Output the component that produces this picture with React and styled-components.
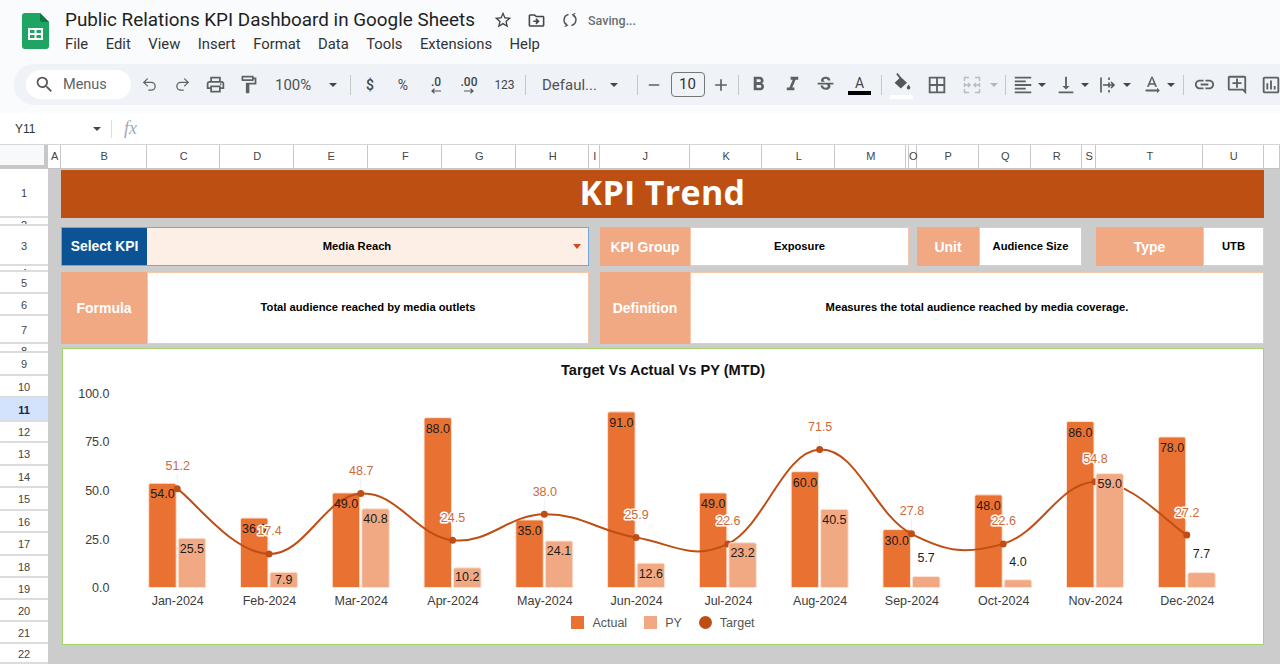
import React from 'react';
import styled, { createGlobalStyle } from 'styled-components';
import {
    MdSearch, MdOutlinePrint, MdOutlineFormatPaint, MdOutlineStarBorder, MdOutlineDriveFileMove,
    MdFormatBold, MdFormatItalic, MdStrikethroughS, MdOutlineBorderAll, MdFormatAlignLeft,
    MdVerticalAlignBottom, MdLink, MdOutlineAddComment, MdOutlineInsertChart, MdAdd, MdRemove,
    MdTextRotationNone,
} from 'react-icons/md';
import { Undo2, Redo2 } from 'lucide-react';

const MENU = ['File', 'Edit', 'View', 'Insert', 'Format', 'Data', 'Tools', 'Extensions', 'Help'];

const COLUMNS = [
    ['A', 13], ['B', 86], ['C', 73], ['D', 74], ['E', 74], ['F', 74], ['G', 74], ['H', 73], ['I', 11],
    ['J', 90], ['K', 72], ['L', 73], ['M', 71], ['', 3], ['O', 8], ['P', 62], ['Q', 52], ['R', 51],
    ['S', 14], ['T', 107], ['U', 61], ['', 16],
];

const ROWS = [
    ['1', 49], ['2', 8], ['3', 40], ['4', 6], ['5', 22], ['6', 22], ['7', 28], ['8', 9], ['9', 23],
    ['10', 22], ['11', 24], ['12', 21], ['13', 23], ['14', 22], ['15', 23], ['16', 22], ['17', 23],
    ['18', 22], ['19', 22], ['20', 22], ['21', 22], ['22', 20],
];

const MONTHS = [
    { name: 'Jan-2024', actual: 54, py: 25.5, target: 51.2 },
    { name: 'Feb-2024', actual: 36, py: 7.9, target: 17.4, pyLabel: 580 },
    { name: 'Mar-2024', actual: 49, py: 40.8, target: 48.7 },
    { name: 'Apr-2024', actual: 88, py: 10.2, target: 24.5, pyLabel: 577 },
    { name: 'May-2024', actual: 35, py: 24.1, target: 38 },
    { name: 'Jun-2024', actual: 91, py: 12.6, target: 25.9 },
    { name: 'Jul-2024', actual: 49, py: 23.2, target: 22.6 },
    { name: 'Aug-2024', actual: 60, py: 40.5, target: 71.5 },
    { name: 'Sep-2024', actual: 30, py: 5.7, target: 27.8, pyLabel: 558 },
    { name: 'Oct-2024', actual: 48, py: 4, target: 22.6, pyLabel: 562 },
    { name: 'Nov-2024', actual: 86, py: 59, target: 54.8 },
    { name: 'Dec-2024', actual: 78, py: 7.7, target: 27.2, pyLabel: 554 },
];

const BASE = 588;
const UNIT = 1.93;
const valueY = (v) => BASE - v * UNIT;
const monthX = (i) => 177.7 + i * 91.78;

const barPath = (x, v) => {
    const y = valueY(v);
    return `M${x} ${BASE}V${y + 2}Q${x} ${y} ${x + 2} ${y}H${x + 25.5}Q${x + 27.5} ${y} ${x + 27.5} ${y + 2}V${BASE}Z`;
};

function targetCurve() {
    const pts = MONTHS.map((m, i) => [monthX(i), valueY(m.target)]);
    const tangent = (i) => {
        const a = pts[Math.max(i - 1, 0)];
        const b = pts[Math.min(i + 1, pts.length - 1)];
        return [(b[0] - a[0]) * 0.2, (b[1] - a[1]) * 0.2];
    };
    let d = `M${pts[0][0]} ${pts[0][1]}`;
    for (let i = 0; i < pts.length - 1; i++) {
        const t0 = tangent(i);
        const t1 = tangent(i + 1);
        d += `C${pts[i][0] + t0[0]} ${pts[i][1] + t0[1]} ${pts[i + 1][0] - t1[0]} ${pts[i + 1][1] - t1[1]} ${pts[i + 1][0]} ${pts[i + 1][1]}`;
    }
    return d;
}

function SheetsLogo() {
    return (
        <LogoSvg viewBox="0 0 27 36" width="27" height="36">
            <path d="M3 0H18L27 9V33a3 3 0 0 1-3 3H3a3 3 0 0 1-3-3V3a3 3 0 0 1 3-3Z" fill="#1fa463" />
            <path d="M18 0L27 9H20a2 2 0 0 1-2-2Z" fill="#0c7a43" />
            <path d="M6 15H21V27H6ZM8 17V20H12.5V17ZM14.5 17V20H19V17ZM8 22V25H12.5V22ZM14.5 22V25H19V22Z" fill="#fff" fillRule="evenodd" />
        </LogoSvg>
    );
}

function SyncIcon() {
    return (
        <svg viewBox="0 0 16 16" width="16" height="16" fill="none" stroke="#555" strokeWidth="1.5">
            <path d="M6.5 2.6A5.6 5.6 0 0 0 5 13" />
            <path d="M9.5 13.4A5.6 5.6 0 0 0 11 3" />
            <path d="M3.2 10.8L5.4 13.4L2.6 14.4M12.8 5.2L10.6 2.6L13.4 1.6" strokeWidth="1.1" />
        </svg>
    );
}

function MergeIcon() {
    return (
        <svg viewBox="0 0 18 18" width="18" height="18" fill="none" stroke="#b4b7ba" strokeWidth="1.5">
            <path d="M6 1.5H1.5V5M1.5 7V11M1.5 13V16.5H6M12 1.5H16.5V5M16.5 7V11M16.5 13V16.5H12" />
            <path d="M1.5 9H6.5M5 7L7 9L5 11M16.5 9H11.5M13 7L11 9L13 11" />
        </svg>
    );
}

function WrapIcon() {
    return (
        <svg viewBox="0 0 18 18" width="18" height="18" fill="none" stroke="#444746" strokeWidth="1.6">
            <path d="M2 1.5V16.5M10 1.5V4M10 6.5V11.5M10 14V16.5M4 9H15M12 6L15 9L12 12" />
        </svg>
    );
}

function FillIcon() {
    return (
        <svg viewBox="0 0 20 20" width="20" height="20" fill="#444746">
            <path d="M4.2 1L5.6 0L9 4.2L15 9.8L8.8 15.6L2.6 9.8L7.4 5.2Z" />
            <path d="M16.6 11.5C17.6 13 18.4 14 18.4 15A1.9 1.9 0 0 1 14.7 15C14.7 14 15.6 13 16.6 11.5Z" />
        </svg>
    );
}

function DecimalArrow({ flip }) {
    return (
        <svg viewBox="0 0 10 6" width="10" height="6" fill="none" stroke="#444746" strokeWidth="1.2">
            <path d={flip ? 'M0 3H9M6.5 .8L9 3L6.5 5.2' : 'M10 3H1M3.5 .8L1 3L3.5 5.2'} />
        </svg>
    );
}

function TrendChart() {
    return (
        <ChartCard>
            <ChartTitle>Target Vs Actual Vs PY (MTD)</ChartTitle>
            <ChartSvg viewBox="63.5 379.5 1199 232" width="1199" height="232">
                {[0, 25, 50, 75, 100].map((v) => (
                    <AxisText key={v} x="110" y={587.7 - v * 1.944 + 5} textAnchor="end">{v.toFixed(1)}</AxisText>
                ))}
                {MONTHS.map((m, i) => (
                    <path key={m.name} d={barPath(monthX(i) - 28.5, m.actual)} fill="#e97132" stroke="#fbe3d6" strokeWidth="1" />
                ))}
                {MONTHS.map((m, i) => (
                    <line key={m.name} x1={monthX(i)} x2={monthX(i)} y1={valueY(m.target) - 15} y2={valueY(m.target)} stroke="#eeeeee" />
                ))}
                <path d={targetCurve()} fill="none" stroke="#bf4e14" strokeWidth="2" />
                {MONTHS.map((m, i) => (
                    <circle key={m.name} cx={monthX(i)} cy={valueY(m.target)} r="3.5" fill="#bf4e14" />
                ))}
                {MONTHS.map((m, i) => (
                    <path key={m.name} d={barPath(monthX(i) + 1, m.py)} fill="#f1a983" stroke="#fbe3d6" strokeWidth="1" />
                ))}
                {MONTHS.map((m, i) => (
                    <DataText key={m.name} x={monthX(i) - 14.7} y={valueY(m.actual) + 15} textAnchor="middle">{m.actual.toFixed(1)}</DataText>
                ))}
                {MONTHS.map((m, i) => (
                    <DataText key={m.name} x={monthX(i) + 14.7} y={(m.pyLabel || valueY(m.py) + 10) + 4.5} textAnchor="middle">{m.py.toFixed(1)}</DataText>
                ))}
                {MONTHS.map((m, i) => (
                    <TargetText key={m.name} x={monthX(i) + 0.5} y={valueY(m.target) - 18.5} textAnchor="middle">{m.target.toFixed(1)}</TargetText>
                ))}
                {MONTHS.map((m, i) => (
                    <AxisText key={m.name} x={monthX(i) + 0.5} y="605" textAnchor="middle">{m.name}</AxisText>
                ))}
            </ChartSvg>
            <Legend>
                <LegendItem><Swatch $color="#e97132" />Actual</LegendItem>
                <LegendItem><Swatch $color="#f1a983" />PY</LegendItem>
                <LegendItem><Swatch $color="#bf4e14" $round />Target</LegendItem>
            </Legend>
        </ChartCard>
    );
}

function App() {
    return (
        <Page>
            <GlobalStyle />
            <TopBar>
                <SheetsLogo />
                <TitleBlock>
                    <TitleRow>
                        <DocTitle>Public Relations KPI Dashboard in Google Sheets</DocTitle>
                        <MdOutlineStarBorder size={20} color="#444746" />
                        <MdOutlineDriveFileMove size={19} color="#444746" />
                        <SyncIcon />
                        <SavingText>Saving...</SavingText>
                    </TitleRow>
                    <MenuRow>
                        {MENU.map((item) => <MenuItem key={item}>{item}</MenuItem>)}
                    </MenuRow>
                </TitleBlock>
            </TopBar>

            <Toolbar>
                <MenusPill><MdSearch size={21} color="#444746" />Menus</MenusPill>
                <ToolBtn $ml={1.5}><Undo2 size={17} strokeWidth={1.8} /></ToolBtn>
                <ToolBtn><Redo2 size={17} strokeWidth={1.8} /></ToolBtn>
                <ToolBtn><MdOutlinePrint size={21} /></ToolBtn>
                <ToolBtn><MdOutlineFormatPaint size={21} /></ToolBtn>
                <SelectBtn $w={85} $pl={10.5} $gap={18}><span>100%</span><Caret /></SelectBtn>
                <Divider />
                <ToolBtn $ml={3}><ToolText $bold>$</ToolText></ToolBtn>
                <ToolBtn><ToolText>%</ToolText></ToolBtn>
                <ToolBtn><DecimalStack><ToolText $small $bold>.0</ToolText><DecimalArrow /></DecimalStack></ToolBtn>
                <ToolBtn><DecimalStack><ToolText $small $bold>.00</ToolText><DecimalArrow flip /></DecimalStack></ToolBtn>
                <ToolBtn $ml={2.5}><ToolText $small>123</ToolText></ToolBtn>
                <Divider $ml={3.5} />
                <SelectBtn $w={111} $pl={16.5} $gap={13}><span>Defaul...</span><Caret /></SelectBtn>
                <Divider />
                <ToolBtn $w={26} $ml={3}><MdRemove size={18} /></ToolBtn>
                <SizeBox>10</SizeBox>
                <ToolBtn $w={26} $ml={3.5}><MdAdd size={20} /></ToolBtn>
                <Divider $ml={3.5} />
                <ToolBtn $ml={3}><MdFormatBold size={23} /></ToolBtn>
                <ToolBtn $ml={1}><MdFormatItalic size={23} /></ToolBtn>
                <ToolBtn $ml={0.5}><MdStrikethroughS size={21} /></ToolBtn>
                <ToolBtn $ml={1}>
                    <ColorStack><ToolText>A</ToolText><ColorBar $color="#000" /></ColorStack>
                </ToolBtn>
                <Divider $ml={4.5} />
                <ToolBtn $ml={3.5}>
                    <ColorStack><FillIcon /><ColorBar $color="#fff" /></ColorStack>
                </ToolBtn>
                <ToolBtn $ml={2.5}><MdOutlineBorderAll size={22} /></ToolBtn>
                <SelectBtn $w={51} $pl={9.5} $gap={9}><MergeIcon /><Caret $muted /></SelectBtn>
                <Divider />
                <SelectBtn $w={46.5} $pl={6} $gap={4}><MdFormatAlignLeft size={22} /><Caret /></SelectBtn>
                <SelectBtn $w={43} $pl={3} $gap={4}><MdVerticalAlignBottom size={22} /><Caret /></SelectBtn>
                <SelectBtn $w={43} $pl={4} $gap={6}><WrapIcon /><Caret /></SelectBtn>
                <SelectBtn $w={42} $pl={3} $gap={4}><MdTextRotationNone size={22} /><Caret /></SelectBtn>
                <Divider $ml={3} />
                <ToolBtn $ml={4}><MdLink size={23} /></ToolBtn>
                <ToolBtn $ml={-1}><MdOutlineAddComment size={22} /></ToolBtn>
                <ToolBtn $ml={1}><MdOutlineInsertChart size={22} /></ToolBtn>
            </Toolbar>

            <FormulaBar>
                <NameBox>Y11<Caret /></NameBox>
                <FormulaDivider />
                <FxMark>fx</FxMark>
            </FormulaBar>

            <ColumnHeader>
                <Corner />
                {COLUMNS.map(([label, w], i) => <ColumnCell key={i} $w={w}>{label}</ColumnCell>)}
            </ColumnHeader>

            <SheetBody>
                <RowHeader>
                    {ROWS.map(([label, h]) => (
                        <RowCell key={label} $h={h} $active={label === '11'} $clipped={h < 10}>{label}</RowCell>
                    ))}
                </RowHeader>
                <Dashboard>
                    <Banner>KPI Trend</Banner>

                    <SelectLabel>Select KPI</SelectLabel>
                    <SelectValue>Media Reach<DropMark /></SelectValue>

                    <FieldLabel $row={4} $col="10 / 11">KPI Group</FieldLabel>
                    <FieldValue $row={4} $col="11 / 15">Exposure</FieldValue>
                    <FieldLabel $row={4} $col="16 / 17">Unit</FieldLabel>
                    <FieldValue $row={4} $col="17 / 19">Audience Size</FieldValue>
                    <FieldLabel $row={4} $col="20 / 21">Type</FieldLabel>
                    <FieldValue $row={4} $col="21 / 22">UTB</FieldValue>

                    <FieldLabel $row={6} $col="2 / 3">Formula</FieldLabel>
                    <FieldValue $row={6} $col="3 / 9">Total audience reached by media outlets</FieldValue>
                    <FieldLabel $row={6} $col="10 / 11">Definition</FieldLabel>
                    <FieldValue $row={6} $col="11 / 22">Measures the total audience reached by media coverage.</FieldValue>

                    <TrendChart />
                </Dashboard>
            </SheetBody>
        </Page>
    );
}

const GlobalStyle = createGlobalStyle`
    html, body {
        margin: 0;
        padding: 0;
        background: #fff;
        overflow: hidden;
    }
    * {
        box-sizing: border-box;
    }
`;

const Page = styled.div`
    width: 1280px;
    height: 664px;
    overflow: hidden;
    background: #f9fbfd;
    font-family: 'Liberation Sans', Arial, sans-serif;
    color: #444746;
`;

const TopBar = styled.header`
    display: flex;
    height: 64px;
    padding: 13px 0 0 22px;
    gap: 16px;
`;

const LogoSvg = styled.svg`
    flex: none;
`;

const TitleBlock = styled.div`
    display: flex;
    flex-direction: column;
    margin-top: -5px;
`;

const TitleRow = styled.div`
    display: flex;
    align-items: center;
    height: 24px;
    gap: 14px;
    svg:nth-of-type(3) {
        margin-left: 2px;
    }
`;

const DocTitle = styled.div`
    width: 410px;
    margin: -1px 4px 0 0;
    font-family: Roboto, sans-serif;
    font-size: 18.85px;
    color: #1f1f1f;
    white-space: nowrap;
`;

const SavingText = styled.span`
    margin-left: -4px;
    font-family: Roboto, sans-serif;
    font-size: 12.5px;
    font-weight: 500;
    color: #6b6f72;
`;

const MenuRow = styled.nav`
    display: flex;
    gap: 17.5px;
    margin-top: 3px;
`;

const MenuItem = styled.span`
    font-family: Roboto, sans-serif;
    font-size: 14.8px;
    line-height: 18px;
    color: #333;
`;

const Toolbar = styled.div`
    display: flex;
    align-items: center;
    height: 41px;
    margin-left: 14px;
    padding-left: 12px;
    background: #eff3f8;
    border-radius: 20px 0 0 20px;
    overflow: hidden;
    svg {
        flex: none;
        opacity: 0.9;
    }
`;

const MenusPill = styled.div`
    flex: none;
    display: flex;
    align-items: center;
    gap: 8px;
    width: 105px;
    height: 29px;
    padding-left: 8px;
    background: #fff;
    border-radius: 15px;
    font-family: Roboto, sans-serif;
    font-size: 14.5px;
    color: #5f6368;
`;

const ToolBtn = styled.div`
    flex: none;
    display: flex;
    align-items: center;
    justify-content: center;
    width: ${(p) => p.$w || 33}px;
    height: 30px;
    margin-left: ${(p) => p.$ml || 0}px;
    color: #4f5251;
`;

const SelectBtn = styled.div`
    flex: none;
    display: flex;
    align-items: center;
    gap: ${(p) => p.$gap}px;
    width: ${(p) => p.$w}px;
    height: 30px;
    padding-left: ${(p) => p.$pl}px;
    font-family: Roboto, sans-serif;
    font-size: 15px;
    color: #4f5251;
    white-space: nowrap;
`;

const ToolText = styled.span`
    font-family: Roboto, sans-serif;
    font-size: ${(p) => (p.$small ? 12 : 14)}px;
    font-weight: ${(p) => (p.$bold ? 500 : 400)};
    line-height: 12px;
    color: #444746;
`;

const DecimalStack = styled.div`
    display: flex;
    flex-direction: column;
    align-items: center;
    gap: 0;
`;

const ColorStack = styled.div`
    display: flex;
    flex-direction: column;
    align-items: center;
    gap: 2px;
    margin-top: 2px;
`;

const ColorBar = styled.div`
    width: 23px;
    height: 4px;
    background: ${(p) => p.$color};
`;

const Caret = styled.i`
    flex: none;
    width: 0;
    height: 0;
    border-left: 4px solid transparent;
    border-right: 4px solid transparent;
    border-top: 4px solid ${(p) => (p.$muted ? '#b4b7ba' : '#444746')};
`;

const Divider = styled.div`
    flex: none;
    width: 1px;
    height: 20px;
    margin-left: ${(p) => p.$ml || 0}px;
    background: #c7c7c7;
`;

const SizeBox = styled.div`
    flex: none;
    width: 34px;
    height: 25px;
    margin-left: 4px;
    border: 1px solid #747775;
    border-radius: 4px;
    text-align: center;
    font-family: Roboto, sans-serif;
    font-size: 15px;
    line-height: 23px;
    color: #333;
`;

const FormulaBar = styled.div`
    display: flex;
    align-items: center;
    height: 31px;
    margin-top: 8px;
    padding-left: 15px;
    background: #fff;
`;

const NameBox = styled.div`
    display: flex;
    align-items: center;
    justify-content: space-between;
    width: 86px;
    font-size: 12px;
    color: #333;
`;

const FormulaDivider = styled.div`
    width: 1px;
    height: 18px;
    margin-left: 10px;
    background: #dadce0;
`;

const FxMark = styled.span`
    margin-left: 12px;
    font-family: 'Liberation Serif', serif;
    font-style: italic;
    font-size: 18px;
    color: #a3a8ad;
`;

const ColumnHeader = styled.div`
    display: flex;
    height: 25px;
    background: #fff;
    border-top: 1px solid #d5d5d5;
    border-bottom: 1px solid #c4c4c4;
`;

const Corner = styled.div`
    flex: none;
    width: 48px;
    height: 24px;
    background: #f8f9fa;
    border-right: 4px solid #c7c7c7;
    border-bottom: 4px solid #c7c7c7;
`;

const ColumnCell = styled.div`
    flex: none;
    display: flex;
    justify-content: center;
    width: ${(p) => p.$w}px;
    padding-left: 1.5px;
    border-right: 1px solid #c7c7c7;
    font-size: 11px;
    line-height: 22px;
    color: #444;
`;

const SheetBody = styled.div`
    display: flex;
    height: 495px;
`;

const RowHeader = styled.div`
    flex: none;
    width: 48px;
    background: #fff;
`;

const RowCell = styled.div`
    display: flex;
    align-items: ${(p) => (p.$clipped ? 'flex-start' : 'center')};
    justify-content: center;
    height: ${(p) => p.$h}px;
    padding-top: 1px;
    overflow: hidden;
    border-bottom: 2px solid #dcdcdc;
    background: ${(p) => (p.$active ? '#d3e3fd' : '#fff')};
    font-size: 11px;
    font-weight: ${(p) => (p.$active ? 700 : 400)};
    color: ${(p) => (p.$active ? '#0b2a52' : '#444')};
`;

const Dashboard = styled.div`
    flex: none;
    display: grid;
    width: 1232px;
    background: #ccc;
    grid-template-columns: 13px 86px 73px 74px 74px 74px 74px 73px 11px 90px 72px 73px 71px 3px 8px 62px 52px 51px 14px 107px 61px 16px;
    grid-template-rows: 1px 48px 9px 39px 6px 72px 4px 297px 19px;
`;

const Banner = styled.h1`
    grid-column: 2 / 22;
    grid-row: 2;
    display: flex;
    align-items: center;
    justify-content: center;
    margin: 0;
    padding-bottom: 4px;
    background: #bc4f11;
    font-family: 'Open Sans', sans-serif;
    font-size: 34px;
    font-weight: 700;
    letter-spacing: 0.3px;
    color: #fff;
`;

const SelectLabel = styled.div`
    grid-column: 2 / 3;
    grid-row: 4;
    display: flex;
    align-items: center;
    justify-content: center;
    background: #0b5394;
    border: 1px solid #6fa8dc;
    border-right: 0;
    font-size: 13.8px;
    font-weight: 700;
    color: #fff;
`;

const SelectValue = styled.div`
    position: relative;
    grid-column: 3 / 9;
    grid-row: 4;
    display: flex;
    align-items: center;
    justify-content: center;
    padding-right: 21px;
    padding-bottom: 2px;
    background: #fdeee6;
    border: 1px solid #6fa8dc;
    border-left: 0;
    font-size: 11.2px;
    font-weight: 700;
    color: #000;
`;

const DropMark = styled.i`
    position: absolute;
    right: 7px;
    top: 16px;
    border-left: 4px solid transparent;
    border-right: 4px solid transparent;
    border-top: 5px solid #d9481c;
`;

const FieldLabel = styled.div`
    grid-column: ${(p) => p.$col};
    grid-row: ${(p) => p.$row};
    display: flex;
    align-items: center;
    justify-content: center;
    background: #f1a983;
    font-size: 14px;
    font-weight: 700;
    color: #fff;
`;

const FieldValue = styled.div`
    grid-column: ${(p) => p.$col};
    grid-row: ${(p) => p.$row};
    display: flex;
    align-items: center;
    justify-content: center;
    padding-bottom: 2px;
    background: #fff;
    border: 1px solid #f8c6a8;
    font-size: 11.2px;
    font-weight: 700;
    color: #000;
`;

const ChartCard = styled.section`
    grid-column: 2 / 22;
    grid-row: 8;
    display: flex;
    flex-direction: column;
    margin-left: 1px;
    background: #fff;
    border: 1.5px solid #a5d46a;
`;

const ChartTitle = styled.h2`
    height: 30px;
    margin: 0;
    text-align: center;
    font-size: 14.6px;
    font-weight: 700;
    line-height: 43px;
    color: #111;
`;

const ChartSvg = styled.svg`
    flex: none;
    font-family: 'Liberation Sans', Arial, sans-serif;
    font-size: 12.5px;
`;

const AxisText = styled.text`
    fill: #3c3c3c;
`;

const DataText = styled.text`
    fill: #1c1c1c;
`;

const TargetText = styled.text`
    fill: #cc6a3c;
    stroke: #fff;
    stroke-width: 3px;
    paint-order: stroke;
    stroke-linejoin: round;
`;

const Legend = styled.div`
    display: flex;
    justify-content: center;
    gap: 17px;
    height: 23px;
    align-items: center;
    font-size: 12.5px;
    color: #555;
`;

const LegendItem = styled.div`
    display: flex;
    align-items: center;
    gap: 8px;
`;

const Swatch = styled.i`
    width: 13px;
    height: 13px;
    background: ${(p) => p.$color};
    border-radius: ${(p) => (p.$round ? '50%' : '0')};
`;

export default App;
